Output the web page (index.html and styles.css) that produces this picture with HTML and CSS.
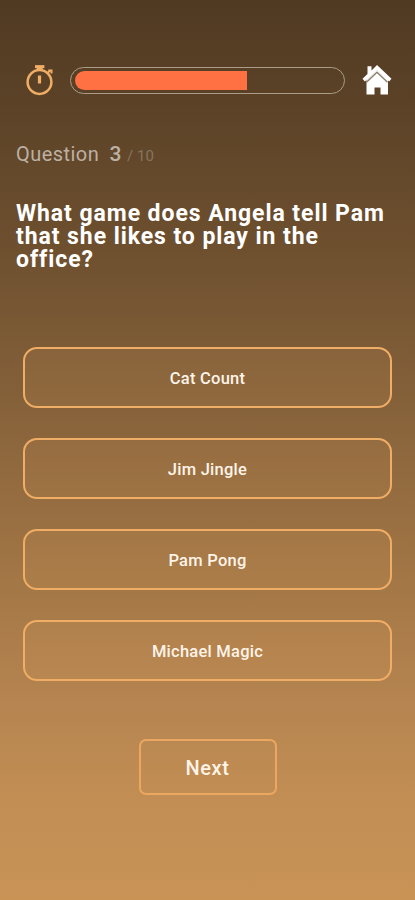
FILE: index.html
```
<!DOCTYPE html>
<html lang="en">
<head>
    <meta charset="UTF-8">
    <meta name="viewport" content="width=device-width, initial-scale=1.0">
    <title>Office Quiz</title>
    <link rel="stylesheet" href="styles.css">
</head>
<body>

<div class="quiz">
    <header class="top-bar">
        <svg class="timer-icon" viewBox="0 0 28 32" fill="none" stroke="#f0ad65">
            <path d="M9 2.6h9.4" stroke-width="3"/>
            <path d="M13.7 3v3.5" stroke-width="6"/>
            <circle cx="13.5" cy="18" r="11.9" stroke-width="2.5"/>
            <path d="M21 9.5l3-3M22.2 6.5h3.3v3" stroke-width="2"/>
            <path d="M13.5 11.5v8" stroke-width="3.2"/>
        </svg>
        <div class="progress">
            <div class="progress-fill"></div>
        </div>
        <svg class="home-icon" viewBox="0 0 30 32">
            <path d="M15 6L26 16V30.5h-7.5v-7h-6v7H4.5V16z" fill="#fff"/>
            <path d="M4.5 18.2L15 8.2l10.5 10" fill="none" stroke="#8c7f6e" stroke-width="1.4"/>
            <path d="M5.5 2.2h4v4.3L15 1l14.5 13.8-2.4 2.8L15 6.4 2.9 17.6.5 14.8l5-4.8z" fill="#fff"/>
        </svg>
    </header>

    <div class="question-count">Question <span class="current">3</span><span class="total">/ 10</span></div>
    <h1 class="question">What game does Angela tell Pam that she likes to play in the office?</h1>

    <div class="answers">
        <button class="answer">Cat Count</button>
        <button class="answer">Jim Jingle</button>
        <button class="answer">Pam Pong</button>
        <button class="answer">Michael Magic</button>
    </div>

    <button class="next">Next</button>
</div>

</body>
</html>
```
FILE: styles.css
```
* {
    box-sizing: border-box;
}

body {
    margin: 0;
    min-height: 900px;
    font-family: Roboto, sans-serif;
    color: #fff;
    background: linear-gradient(#503a22 0, #5b4227 100px, #6e502f 250px, #85613a 400px, #a67947 600px, #b58450 700px, #c28e54 800px, #c99356 900px);
}

button {
    font-family: inherit;
    color: #fff4e8;
    padding: 2px 0 0;
}

.quiz {
    display: flex;
    flex-direction: column;
    padding: 64px 16px 0;
}

.top-bar {
    display: flex;
    align-items: center;
    height: 32px;
    padding: 0 7px 0 10px;
}

.timer-icon {
    width: 28px;
    height: 32px;
}

.progress {
    flex: 1;
    height: 27px;
    margin: 0 17px 0 16px;
    padding: 3px 4px;
    border: 1px solid #aa9c87;
    border-radius: 14px;
}

.progress-fill {
    width: 65%;
    height: 100%;
    background: #ff7043;
    border-radius: 10px 0 0 10px;
}

.home-icon {
    width: 30px;
    height: 32px;
}

.question-count {
    margin-top: 44px;
    height: 28px;
    font-size: 20px;
    line-height: 28px;
    letter-spacing: 0.45px;
    color: #bcb1a3;
}

.current {
    margin-left: 5px;
    font-size: 21px;
    font-weight: 500;
}

.total {
    margin-left: 5px;
    font-size: 15px;
    letter-spacing: 0.1px;
    color: #877660;
}

.question {
    margin: 34px 0 0;
    max-width: 372px;
    font-size: 23px;
    line-height: 23px;
    font-weight: 700;
    letter-spacing: 0.93px;
}

.answers {
    display: flex;
    flex-direction: column;
    gap: 30px;
    margin: 76px 7px 0;
}

.answer {
    height: 61px;
    font-size: 16.5px;
    font-weight: 500;
    letter-spacing: 0.25px;
    background: rgba(255, 184, 108, 0.09);
    border: 2px solid #f0ad65;
    border-radius: 14px;
}

.next {
    align-self: center;
    width: 138px;
    height: 56px;
    margin-top: 58px;
    font-size: 20px;
    font-weight: 500;
    letter-spacing: 0.6px;
    background: transparent;
    border: 2px solid #eba75f;
    border-radius: 7px;
}
```
